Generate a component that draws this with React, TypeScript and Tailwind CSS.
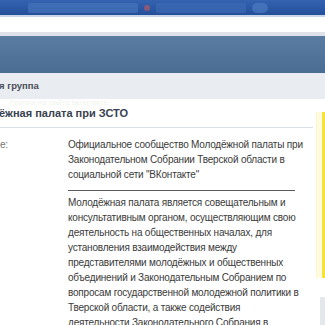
import React from "react";

const first = [
  "Официальное сообщество Молодёжной палаты при",
  "Законодательном Собрании Тверской области в",
  'социальной сети "ВКонтакте"',
];
const second = [
  "Молодёжная палата является совещательным и",
  "консультативным органом, осуществляющим свою",
  "деятельность на общественных началах, для",
  "установления взаимодействия между",
  "представителями молодёжных и общественных",
  "объединений и Законодательным Собранием по",
  "вопросам государственной молодежной политики в",
  "Тверской области, а также содействия",
  "деятельности Законодательного Собрания в",
];

export default function App() {
  return (
    <div
      className="w-[325px] h-[325px] overflow-hidden bg-white relative"
      style={{ fontFamily: "'Liberation Sans', Arial, sans-serif" }}
    >
      {/* top blue bar */}
      <div className="h-[15px] bg-gradient-to-b from-[#3563b0] to-[#24509a] flex items-center gap-[6px] pl-[28px]">
        <div className="w-[110px] h-[10px] bg-[#4a78c0] opacity-60 rounded-[2px]" />
        <div className="w-[6px] h-[6px] bg-[#b05a6a] opacity-70 rounded-full" />
        <div className="w-[90px] h-[10px] bg-[#3f6cb6] opacity-60 rounded-[2px]" />
        <div className="w-[16px] h-[10px] bg-[#5a88cc] opacity-50 rounded-full" />
      </div>
      <div className="h-[2px] bg-[#c9d6e8]" />
      <div className="h-[15px] bg-white" />
      <div className="h-[4px] bg-[#dfe3e9]" />
      {/* vk header */}
      <div className="h-[37px] bg-gradient-to-b from-[#5a7ba2] to-[#4b6c93]" />
      {/* gray bar */}
      <div className="h-[26px] bg-[#e9edf1] flex items-center">
        <span className="text-[9.5px] font-bold text-[#4a4f57] -ml-[1px]">я группа</span>
      </div>
      <div className="h-[7px] flex items-center overflow-hidden">
        <span className="text-[8px] leading-[8px] text-[#f1f5ec] ml-[10px]">Группа на сайте вконтакте</span>
      </div>
      {/* title */}
      <div className="mr-[12px] border-b border-[#dae1e8] h-[22px] flex items-start">
        <span className="text-[11px] font-bold text-[#37414f] leading-[14px] -ml-[1px]">ёжная палата при ЗСТО</span>
      </div>
      <div className="flex pt-[9px] text-[10px] leading-[15px] tracking-[-0.2px] text-[#3a3a3a]">
        <div className="w-[68px] shrink-0 text-[#777]">е:</div>
        <div className="flex flex-col">
          {first.map((l) => (
            <div key={l} className="whitespace-nowrap">{l}</div>
          ))}
          <div className="w-[227px] h-px bg-[#5a5a5a] mt-[8px] mb-[4px]" />
          {second.map((l) => (
            <div key={l} className="whitespace-nowrap">{l}</div>
          ))}
        </div>
      </div>
      {/* right yellow box edge */}
      <div className="absolute left-[316px] top-[112px] w-[9px] h-[166px] bg-[#fffbe0] border-l-[1px] border-[#fdf6c8]">
        <div className="absolute left-[5px] top-0 w-[4px] h-full bg-[#f2e23a]" />
      </div>
      <div className="absolute left-[320px] top-[297px] w-[5px] h-[28px] bg-[#e4e7ec]" />
    </div>
  );
}
